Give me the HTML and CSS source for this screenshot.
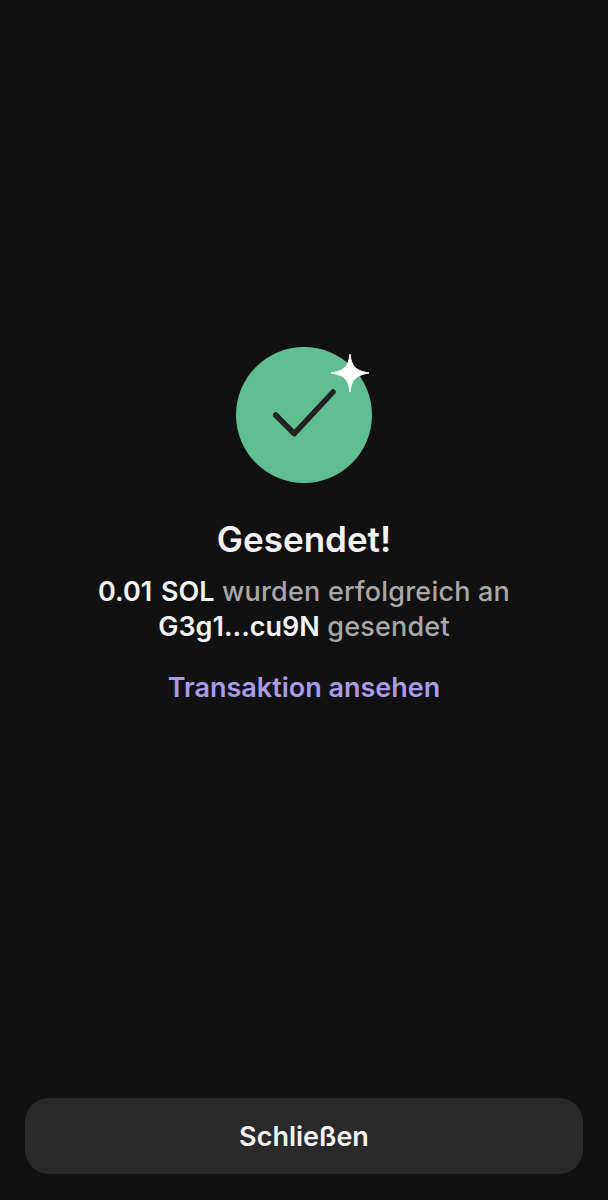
FILE: index.html
```html
<!DOCTYPE html>
<html lang="de">
<head>
  <meta charset="UTF-8">
  <title>Gesendet</title>
  <link rel="stylesheet" href="styles.css">
</head>
<body>
  <main class="result">
    <svg class="badge" width="136" height="136" viewBox="0 0 136 136">
      <circle cx="68" cy="68" r="68" fill="#5fbf93"/>
      <path d="M39.7 68 L58.3 86.7 L97 45" fill="none" stroke="#222" stroke-width="5.5" stroke-linecap="round" stroke-linejoin="round"/>
    </svg>
    <svg class="sparkle" width="40" height="40" viewBox="0 0 40 40">
      <path d="M20 1 C21.5 12 24 17.5 39 20 C24 22.5 21.5 28 20 39 C18.500 28 16 22.500 1 20 C16 17.500 18.500 12 20 1 Z" fill="#fff" stroke="#fff" stroke-width="1" stroke-linejoin="round"/>
    </svg>
    <h1 class="title">Gesendet!</h1>
    <p class="message"><strong>0.01 SOL</strong> wurden erfolgreich an<br><strong>G3g1...cu9N</strong> gesendet</p>
    <a class="link" href="#">Transaktion ansehen</a>
  </main>
  <footer class="actions">
    <button class="close">Schließen</button>
  </footer>
</body>
</html>
```

FILE: styles.css
```css
body {
  margin: 0;
  height: 1200px;
  display: flex;
  flex-direction: column;
  background: #111111;
  font-family: Inter, "Noto Sans", sans-serif;
  overflow: hidden;
}
.result {
  position: relative;
  flex: 1;
  display: flex;
  flex-direction: column;
  align-items: center;
  padding-top: 347px;
  text-align: center;
}
.sparkle {
  position: absolute;
  top: 353px;
  left: 330px;
}
.title {
  margin: 34px 0 0;
  font-size: 35px;
  line-height: 44px;
  font-weight: 600;
  color: #f2f2f2;
}
.message {
  margin: 13px 0 0;
  font-size: 27px;
  line-height: 35px;
  font-weight: 500;
  letter-spacing: 0.2px;
  color: #a8a8a8;
}
.message strong {
  font-weight: 600;
  letter-spacing: 0;
  word-spacing: 2px;
  color: #f2f2f2;
}
.link {
  margin-top: 26px;
  font-size: 27px;
  line-height: 35px;
  font-weight: 600;
  color: #a99be8;
  text-decoration: none;
}
.actions {
  padding: 0 25px 26px;
}
.close {
  display: block;
  width: 100%;
  height: 76px;
  border: 0;
  border-radius: 24px;
  background: #2a2a2a;
  color: #f2f2f2;
  font-family: inherit;
  font-size: 27px;
  font-weight: 600;
}
```
